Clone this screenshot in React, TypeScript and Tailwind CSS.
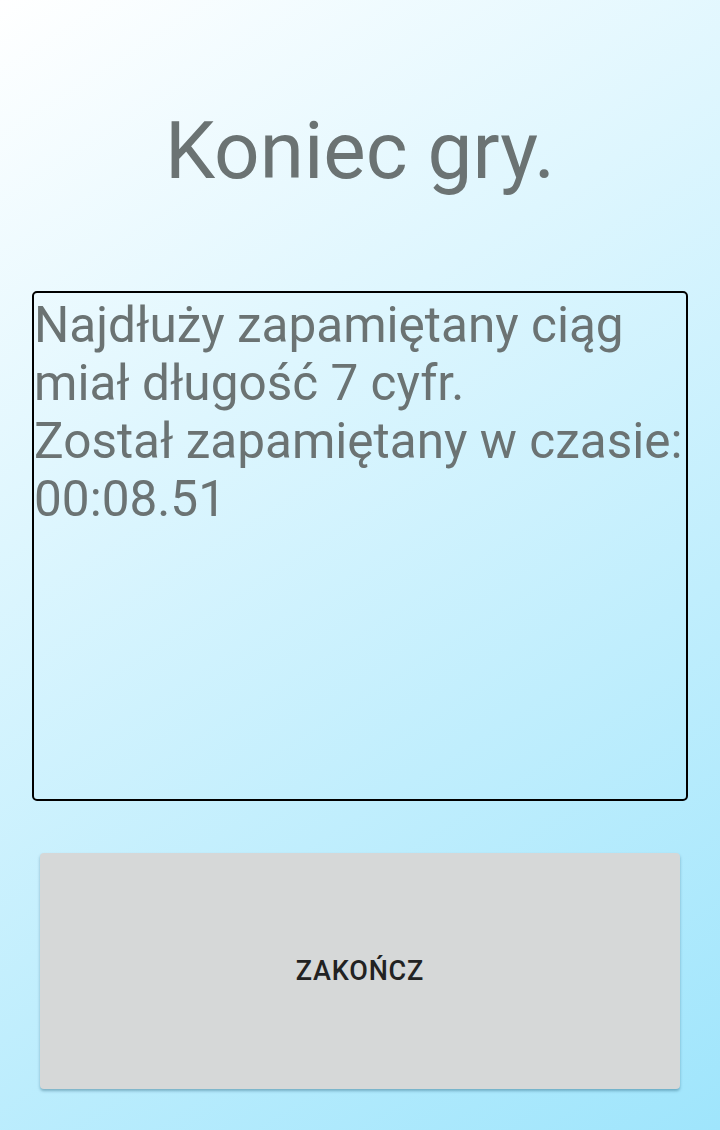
import React from 'react';

const App: React.FC = () => {
  return (
    <div
      className="w-[720px] h-[1130px] overflow-hidden bg-[linear-gradient(147.5deg,#ffffff,#9fe5fc)] flex flex-col"
      style={{ fontFamily: 'Roboto, "Noto Sans", sans-serif' }}
    >
      <h1 className="mt-[104px] text-center text-[80px] leading-[94px] text-[#6b7373] font-normal">
        Koniec gry.
      </h1>
      <div className="mt-[93px] mx-[32px] h-[510px] border-2 border-black rounded-[5px] pt-[3px] text-[49.5px] leading-[58px] text-[#6b7373] whitespace-nowrap">
        <p>Najdłuży zapamiętany ciąg</p>
        <p>miał długość 7 cyfr.</p>
        <p>Został zapamiętany w czasie:</p>
        <p>00:08.51</p>
      </div>
      <button className="mt-[52px] mx-[40px] h-[236px] rounded-[4px] bg-[#d6d8d8] shadow-[0_2px_3px_rgba(0,60,90,0.35)] text-[27px] font-medium tracking-[0.8px] text-[#222222]">
        ZAKOŃCZ
      </button>
    </div>
  );
};

export default App;
